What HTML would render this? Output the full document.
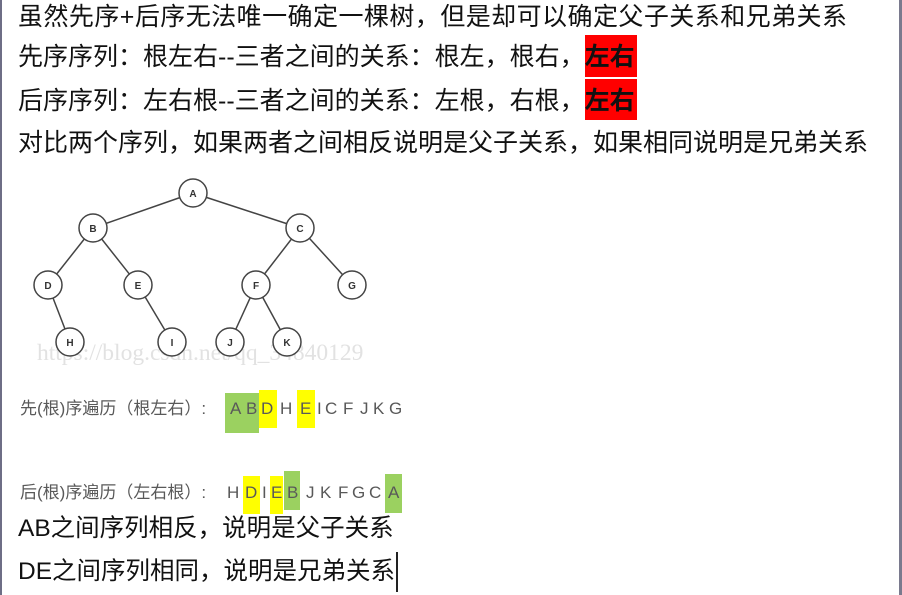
<!DOCTYPE html>
<html><head><meta charset="utf-8"><style>
body{margin:0;width:902px;height:595px;background:#fff;position:relative;overflow:hidden;font-family:"Liberation Sans","Noto Sans CJK SC",sans-serif;}
.l{position:absolute;left:18px;font-size:25px;color:#111;white-space:nowrap;line-height:30px;}
.r{position:absolute;background:#f00;}
.hl{position:absolute;}
.t{position:absolute;font-size:17px;color:#595959;line-height:20px;}
.s{position:absolute;font-size:24.5px;color:#111;white-space:nowrap;line-height:28px;left:18px;}
</style></head><body>
<div style="position:absolute;left:0;top:0;width:2px;height:595px;background:#6e6e86"></div>
<div style="position:absolute;left:899px;top:0;width:3px;height:595px;background:#7a7a8e"></div>
<div class="r" style="left:585px;top:35px;width:52px;height:42px"></div>
<div class="r" style="left:585px;top:79px;width:52px;height:41px"></div>
<div class="l" style="top:2px;letter-spacing:0.45px">虽然先序+后序无法唯一确定一棵树，但是却可以确定父子关系和兄弟关系</div>
<div class="l" style="top:42px">先序序列：根左右--三者之间的关系：根左，根右，<b>左右</b></div>
<div class="l" style="top:86px">后序序列：左右根--三者之间的关系：左根，右根，<b>左右</b></div>
<div class="l" style="top:128px">对比两个序列，如果两者之间相反说明是父子关系，如果相同说明是兄弟关系</div>
<svg style="position:absolute;left:0;top:170px" width="400" height="200" font-family="Liberation Sans" font-size="10" font-weight="bold" fill="#333">
<g stroke="#444" stroke-width="1.5">
<line x1="193" y1="23" x2="93" y2="58"/><line x1="193" y1="23" x2="300" y2="58"/>
<line x1="93" y1="58" x2="48" y2="115"/><line x1="93" y1="58" x2="138" y2="115"/>
<line x1="300" y1="58" x2="256" y2="115"/><line x1="300" y1="58" x2="352" y2="115"/>
<line x1="48" y1="115" x2="70" y2="172"/><line x1="138" y1="115" x2="172" y2="172"/>
<line x1="256" y1="115" x2="230" y2="172"/><line x1="256" y1="115" x2="287" y2="172"/>
</g>
<text x="37" y="190" font-family="Liberation Serif" font-size="23.5" font-weight="normal" fill="#e2e2e2">https://blog.csdn.net/qq_34840129</text>
<g fill="#fff" stroke="#444" stroke-width="1.5">
<circle cx="193" cy="23" r="14"/><circle cx="93" cy="58" r="14"/><circle cx="300" cy="58" r="14"/>
<circle cx="48" cy="115" r="14"/><circle cx="138" cy="115" r="14"/><circle cx="256" cy="115" r="14"/><circle cx="352" cy="115" r="14"/>
<circle cx="70" cy="172" r="14"/><circle cx="172" cy="172" r="14"/><circle cx="230" cy="172" r="14"/><circle cx="287" cy="172" r="14"/>
</g>
<g text-anchor="middle">
<text x="193" y="27">A</text><text x="93" y="62">B</text><text x="300" y="62">C</text>
<text x="48" y="119">D</text><text x="138" y="119">E</text><text x="256" y="119">F</text><text x="352" y="119">G</text>
<text x="70" y="176">H</text><text x="172" y="176">I</text><text x="230" y="176">J</text><text x="287" y="176">K</text>
</g></svg>
<div class="hl" style="left:225px;top:393px;width:34px;height:40px;background:#9bd160"></div>
<div class="hl" style="left:259px;top:390px;width:18px;height:38px;background:#ffff00"></div>
<div class="hl" style="left:297px;top:390px;width:18px;height:38px;background:#ffff00"></div>
<div class="t" style="left:20px;top:399px">先(根)序遍历（根左右）:</div>
<div class="t" style="left:230px;top:399px">A</div><div class="t" style="left:246px;top:399px">B</div>
<div class="t" style="left:261px;top:399px">D</div><div class="t" style="left:280px;top:399px">H</div>
<div class="t" style="left:300px;top:399px">E</div><div class="t" style="left:317px;top:399px">I</div>
<div class="t" style="left:325px;top:399px">C</div><div class="t" style="left:343px;top:399px">F</div>
<div class="t" style="left:360px;top:399px">J</div><div class="t" style="left:373px;top:399px">K</div>
<div class="t" style="left:389px;top:399px">G</div>
<div class="hl" style="left:243px;top:476px;width:17px;height:38px;background:#ffff00"></div>
<div class="hl" style="left:270px;top:476px;width:13px;height:38px;background:#ffff00"></div>
<div class="hl" style="left:284px;top:471px;width:16px;height:39px;background:#9bd160"></div>
<div class="hl" style="left:385px;top:474px;width:17px;height:39px;background:#9bd160"></div>
<div class="t" style="left:20px;top:483px">后(根)序遍历（左右根）:</div>
<div class="t" style="left:227px;top:483px">H</div><div class="t" style="left:245px;top:483px">D</div>
<div class="t" style="left:262px;top:483px">I</div><div class="t" style="left:271px;top:483px">E</div>
<div class="t" style="left:287px;top:483px">B</div><div class="t" style="left:306px;top:483px">J</div>
<div class="t" style="left:320px;top:483px">K</div><div class="t" style="left:338px;top:483px">F</div>
<div class="t" style="left:352px;top:483px">G</div><div class="t" style="left:369px;top:483px">C</div>
<div class="t" style="left:388px;top:483px">A</div>
<div class="s" style="top:515px">AB之间序列相反，说明是父子关系</div>
<div class="s" style="top:558px">DE之间序列相同，说明是兄弟关系</div>
<div style="position:absolute;left:396px;top:552px;width:2px;height:40px;background:#222"></div>
</body></html>
